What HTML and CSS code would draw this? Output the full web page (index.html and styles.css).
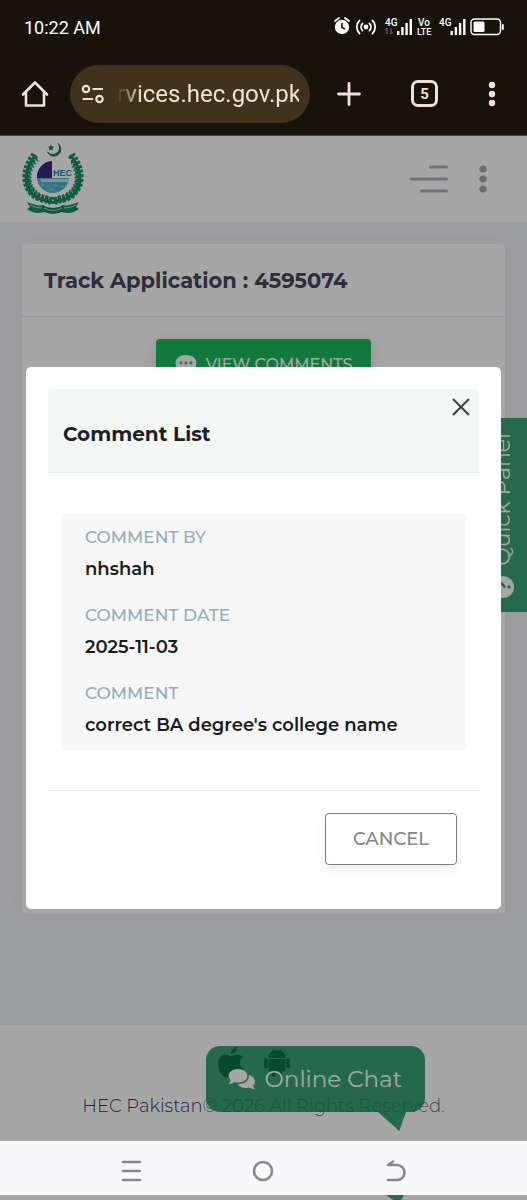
FILE: index.html
```html
<!DOCTYPE html>
<html lang="en">
<head>
  <meta charset="UTF-8">
  <meta name="viewport" content="width=device-width, initial-scale=1.0">
  <title>Track Application</title>
  <link rel="stylesheet" href="styles.css">
</head>
<body>
  <!-- Phone status bar and browser toolbar -->
  <div class="browser-top">
    <div class="status-bar">
      <span>10:22 AM</span>
      <svg class="status-icons" width="172" height="24" viewBox="0 0 172 24" fill="#fff">
        <circle cx="9" cy="12" r="7.2"/>
        <path d="M2 6l4-3M16 6l-4-3" stroke="#fff" stroke-width="1.8" stroke-linecap="round"/>
        <path d="M9 8v4.500l3 1.500" fill="none" stroke="#17130b" stroke-width="1.600"/>
        <circle cx="33" cy="12" r="2.400"/>
        <path d="M29.500 8.500a5 5 0 0 0 0 7M36.500 8.500a5 5 0 0 1 0 7M26.500 5.500a9.200 9.200 0 0 0 0 13M39.500 5.500a9.200 9.200 0 0 1 0 13" fill="none" stroke="#fff" stroke-width="1.800" stroke-linecap="round"/>
        <text x="52" y="11" font-size="10" font-weight="500">4G</text>
        <path d="M54 13v6M52.500 14.500l1.500-1.500M58 13v6M58 19l1.500-1.500" stroke="#77736b" fill="none"/>
        <path d="M64 16h2.400v4h-2.400zM68.200 12h2.400v8h-2.400zM72.400 8h2.400v12h-2.400zM76.600 4h2.400v16h-2.400z"/>
        <text x="85" y="11" font-size="10" font-weight="500">Vo</text>
        <text x="84" y="20" font-size="9" font-weight="500">LTE</text>
        <text x="106" y="11" font-size="10" font-weight="500">4G</text>
        <path d="M117.500 16h2.400v4h-2.400zM121.700 12h2.400v8h-2.400zM125.900 8h2.400v12h-2.400zM130.100 4h2.400v16h-2.400z"/>
        <rect x="138" y="4" width="29.500" height="15.500" rx="3.500" fill="none" stroke="#fff" stroke-width="1.400"/>
        <rect x="140.500" y="6.500" width="11" height="10.500" rx="1.500"/>
        <rect x="168.800" y="9" width="2" height="6" rx="1"/>
      </svg>
    </div>
    <div class="toolbar">
      <button class="tool" aria-label="Home">
        <svg width="28" height="28" viewBox="0 0 28 28" fill="none" stroke="#f2e2d6" stroke-width="2.600" stroke-linejoin="round" stroke-linecap="round"><path d="M5 12.500V25.500h18V12.500M2 14.500L14 2.500l12 12"/></svg>
      </button>
      <div class="address">
        <svg width="24" height="20" viewBox="0 0 24 20" fill="none" stroke="#f2e2d6" stroke-width="2.200"><circle cx="5" cy="5" r="3.200"/><path d="M11.500 5H22M1.500 15H12"/><circle cx="18.500" cy="15" r="3.200"/></svg>
        <input class="url" type="text" aria-label="Address" value="rvices.hec.gov.pk">
      </div>
      <div class="toolbar-actions">
        <button class="tool" aria-label="New tab">
          <svg width="24" height="24" viewBox="0 0 24 24" stroke="#f2e2d6" stroke-width="2.800" stroke-linecap="round"><path d="M12 1.500v21M1.500 12h21"/></svg>
        </button>
        <button class="tool tabs" aria-label="Tabs">5</button>
        <button class="tool" aria-label="Browser menu">
          <svg width="8" height="26" viewBox="0 0 8 26" fill="#f2e2d6"><circle cx="4" cy="4" r="3.200"/><circle cx="4" cy="13" r="3.200"/><circle cx="4" cy="22" r="3.200"/></svg>
        </button>
      </div>
    </div>
  </div>

  <div class="page">
    <header class="site-header">
      <a class="logo" href="#" aria-label="HEC">
        <svg width="64" height="74" viewBox="0 0 64 74">
          <path d="M36 1.500a7 7 0 1 1-10.500 8.500a6.500 6.500 0 1 0 10.500-8.500z" fill="#12865a" stroke="#12865a"/>
          <path d="M29 2.500l1 2 2.200.2-1.600 1.600.5 2.200-2.100-1.100-2 1.100.5-2.200-1.600-1.600 2.200-.2z" fill="#12865a"/>
          <g fill="none" stroke="#159164">
            <path d="M14 13C2 25-1 48 16 56c6 3 10 2 15 5M48 13c12 12 15 35-2 43-6 3-10 2-15 5" stroke-width="3"/>
            <path d="M13 13C1 27 1 47 16 55c6 3 10 2 15 5M49 13c12 14 12 34-3 42-6 3-10 2-15 5" stroke-width="8" stroke-dasharray="2.800 1.500"/>
            <path d="M15 17C4 29 4 45 17 53c5 3 9 3 13 6M47 17c11 12 11 28-2 36-5 3-9 3-13 6" stroke-width="5" stroke-dasharray="1.500 2.500"/>
          </g>
          <circle cx="31" cy="35" r="16" fill="#53b3d1"/>
          <path d="M15 36A16 16 0 0 1 30 19V36z" fill="#3a2b83"/>
          <path d="M30 17h19v19H30z" fill="#fff"/>
          <path d="M18 37h29v3H20z" fill="#c2e3ed"/>
          <path d="M20 41v4M24 44l3 1M32 43l4 1M39 45l3-1M27 48l4-1" stroke="#9cd3e4"/>
          <text x="31" y="34" class="logo-text" fill="#1683ae">HEC</text>
          <path d="M5 60c8 3 12 4 17 3v7c-6 2-12 1-17-3l3-2zM57 60c-8 3-12 4-17 3v7c6 2 12 1 17-3l-3-2z" fill="#159164"/>
          <path d="M20 63q11 6 22 0v6q-11 6-22 0z" fill="#12865a"/>
          <path d="M22 66q9 5 18 0M8 63q6 3 12 3M54 63q-6 3-12 3" fill="none" stroke="#a9dbc8" stroke-width="1"/>
        </svg>
      </a>
      <div class="header-actions">
        <button class="tool" aria-label="Menu">
          <svg width="38" height="28" viewBox="0 0 38 28" stroke="#b0afba" stroke-width="3" stroke-linecap="round"><path d="M20.500 2H36.500M1.500 14h35M11.500 26h25"/></svg>
        </button>
        <button class="tool" aria-label="More">
          <svg width="8" height="28" viewBox="0 0 8 28" fill="#a9a9b0"><circle cx="4" cy="4" r="3.600"/><circle cx="4" cy="14" r="3.600"/><circle cx="4" cy="24" r="3.600"/></svg>
        </button>
      </div>
    </header>

    <main class="content">
      <section class="card">
        <h1 class="card-title">Track Application : 4595074</h1>
        <div class="card-body">
          <button class="btn-comments">
            <svg width="22" height="20" viewBox="0 0 22 20"><path d="M11 1C5 1 .5 4.500.5 9c0 2.500 1 4 2.500 5.500L1 19l6-2c8 2 14.500-2 14.500-8C21.500 4.500 17 1 11 1z" fill="#fff"/><g fill="#1cba5e"><circle cx="6" cy="9" r="1.400"/><circle cx="11" cy="9" r="1.400"/><circle cx="16" cy="9" r="1.400"/></g></svg>
            VIEW COMMENTS
          </button>
        </div>
      </section>
    </main>

    <footer class="site-footer">
      <div class="apps">
        <a href="#" aria-label="iOS app">
          <svg width="26" height="32" viewBox="0 0 26 32" fill="#111"><path d="M13 9c2 0 4-2 7-1.500 2 .2 4 1.500 5 3-5 3-4 9.500 1 11.500-1.500 4-4 8-6.500 8.500-2 .2-3-1.200-5.500-1.200s-3.500 1.200-5.500 1.200C4 30.500 0 23 0 17.500 0 11 4 7.500 8 7.500c2 0 3.500 1.500 5 1.500zM13 7c0-3.500 2.500-6.500 6-7 .3 4-2.500 7-6 7z"/></svg>
        </a>
        <a href="#" aria-label="Android app">
          <svg width="26" height="32" viewBox="0 0 26 32" fill="#111"><path d="M4.500 11C4.500 6 7 4.500 9 4L8 2.300l.8-.5L10 3.600q3-.8 6 0l1.200-1.800.8.5L17 4c2 .5 4.500 2 4.500 7zM4.500 12h17v11q0 1.500-1.500 1.500h-2V28q0 1.800-1.800 1.800T14.500 28v-3.500h-3V28q0 1.800-1.800 1.800T8 28v-3.500H6q-1.500 0-1.500-1.500z"/><rect y="11" width="3.800" height="10.500" rx="1.700"/><rect x="22.200" y="11" width="3.800" height="10.500" rx="1.700"/></svg>
        </a>
      </div>
      <p class="copyright"><a href="#">HEC Pakistan</a>© 2026 All Rights Reserved.</p>
    </footer>

    <button class="quick-panel">
      <svg width="22" height="22" viewBox="0 0 22 22"><circle cx="11" cy="11" r="11" fill="#fff"/><g transform="rotate(-90 11 11)"><path d="M7.500 8.500a3.500 3.500 0 1 1 5 3q-1.500.7-1.500 2" fill="none" stroke="#3aa476" stroke-width="2.600"/><circle cx="11" cy="17" r="1.700" fill="#3aa476"/></g></svg>
      <span>Quick Panel</span>
    </button>

    <button class="chat">
      <svg width="28" height="22" viewBox="0 0 28 22" fill="#fff"><path d="M10 1c5.500 0 9.500 3 9.500 6.800s-4 6.800-9.500 6.800q-2 0-3.500-.5Q4 16 .5 16 2.500 14 2.800 12.200.5 10.500.5 7.800C.5 4 4.500 1 10 1z"/><path d="M21 7c3.500 1 6 3.300 6 6.200q0 2.800-2 4.500.5 2 2.500 3.500-3.500.3-6-1.600c-5 1.200-10-.3-11.800-3.400C16.500 16.200 21.500 12.500 21 7z"/></svg>
      Online Chat
    </button>

    <!-- Comment list dialog -->
    <div class="overlay">
      <div class="modal" role="dialog" aria-labelledby="modalTitle">
        <div class="modal-header">
          <h2 id="modalTitle">Comment List</h2>
          <button class="close" aria-label="Close">
            <svg width="18" height="18" viewBox="0 0 18 18" stroke="#444" stroke-width="2.200"><path d="M1 1l16 16M17 1L1 17"/></svg>
          </button>
        </div>
        <dl class="comment">
          <div>
            <dt>COMMENT BY</dt>
            <dd>nhshah</dd>
          </div>
          <div>
            <dt>COMMENT DATE</dt>
            <dd>2025-11-03</dd>
          </div>
          <div>
            <dt>COMMENT</dt>
            <dd>correct BA degree's college name</dd>
          </div>
        </dl>
        <div class="modal-footer">
          <button class="btn-cancel">CANCEL</button>
        </div>
      </div>
    </div>
  </div>

  <!-- System navigation -->
  <nav class="system-nav">
    <button class="tool" aria-label="Recents">
      <svg width="22" height="22" viewBox="0 0 22 22" stroke="#88888b" stroke-width="2.600" stroke-linecap="round"><path d="M3 2h17M3 11h17M3 20h17"/></svg>
    </button>
    <button class="tool" aria-label="Home screen">
      <svg width="22" height="22" viewBox="0 0 22 22" fill="none" stroke="#88888b" stroke-width="2.600"><circle cx="11" cy="11" r="9"/></svg>
    </button>
    <button class="tool" aria-label="Back">
      <svg width="22" height="22" viewBox="0 0 22 22" fill="none" stroke="#88888b" stroke-width="2.600" stroke-linecap="round" stroke-linejoin="round"><path d="M8 1.500L3 5H12a7.500 7.500 0 0 1 0 15H3"/></svg>
    </button>
  </nav>
  <div class="page-edge"></div>
</body>
</html>
```
FILE: styles.css
```css
* {
  box-sizing: border-box;
}
body {
  margin: 0;
  min-height: 100vh;
  display: flex;
  flex-direction: column;
  font-family: Montserrat, Inter, sans-serif;
  font-size: 18px;
  background: #a6a6a6;
}
h1, h2, p, dl, dd {
  margin: 0;
}
button {
  font-family: inherit;
  border: none;
  cursor: pointer;
}
svg {
  display: block;
  flex-shrink: 0;
}
a {
  text-decoration: none;
}
.tool {
  background: none;
  padding: 0;
}

/* Browser */
.browser-top {
  background: #17130b;
  border-bottom: 1px solid #4c4637;
  font-family: Roboto, sans-serif;
  color: #fff;
}
.status-bar {
  display: flex;
  align-items: center;
  justify-content: space-between;
  height: 54px;
  padding: 0 22px 0 24px;
}
.toolbar {
  display: flex;
  align-items: center;
  height: 81px;
  padding: 0 31px 2px 21px;
}
.address {
  flex: 1;
  min-width: 0;
  display: flex;
  align-items: center;
  gap: 12px;
  height: 58px;
  margin: 0 27px 0 21px;
  padding: 0 11px;
  border-radius: 29px;
  background: #41321b;
}
.url {
  flex: 1;
  min-width: 0;
  padding: 0;
  border: none;
  outline: none;
  background: none;
  color: #f2e2d6;
  font-family: Roboto, sans-serif;
  font-size: 24px;
  text-align: right;
  mask-image: linear-gradient(to right, transparent, #000 24px);
}
.toolbar-actions {
  display: flex;
  align-items: center;
  gap: 50px;
}
.tabs {
  width: 27px;
  height: 27px;
  border: 3px solid #f2e2d6;
  border-radius: 7px;
  color: #f2e2d6;
  font-size: 15px;
  font-weight: 700;
}

/* Page */
.page {
  position: relative;
  flex: 1;
  display: flex;
  flex-direction: column;
  background: #f2f3f8;
}
.site-header {
  display: flex;
  align-items: center;
  justify-content: space-between;
  height: 86px;
  padding: 0 40px 0 22px;
  background: #fff;
}
.logo-text {
  font-family: "Liberation Sans", sans-serif;
  font-size: 9px;
  font-weight: 700;
}
.header-actions {
  display: flex;
  gap: 31px;
}
.content {
  flex: 1;
  display: flex;
  padding: 22px 22px 111px;
}
.card {
  flex: 1;
  border-radius: 4px;
  background: #fff;
  box-shadow: 0 0 16px rgba(82, 63, 105, 0.08);
}
.card-title {
  padding: 21px 22px 19px;
  border-bottom: 1px solid #e2e3ea;
  color: #48465b;
  font-size: 21px;
  font-weight: 700;
  line-height: 32px;
}
.card-body {
  display: flex;
  justify-content: center;
  padding: 22px;
}
.btn-comments {
  display: flex;
  align-items: center;
  gap: 9px;
  height: 50px;
  padding: 0 19px;
  border-radius: 4px;
  background: #1cba5e;
  box-shadow: 0 4px 16px rgba(0, 0, 0, 0.15);
  color: #fff;
  font-size: 16px;
  font-weight: 500;
}
.site-footer {
  display: flex;
  flex-direction: column;
  align-items: center;
  height: 116px;
  padding-top: 22px;
  background: #fff;
}
.apps {
  display: flex;
}
.apps a {
  margin-right: 20px;
}
.copyright {
  margin-top: 14px;
  color: #646780;
  font-size: 18px;
  font-weight: 300;
  line-height: 26px;
}
.copyright a {
  color: #353460;
}
.quick-panel {
  position: absolute;
  top: 282px;
  right: 0;
  display: flex;
  flex-direction: column-reverse;
  align-items: center;
  gap: 10px;
  height: 194px;
  padding: 14px 11px;
  border-radius: 4px 0 0 4px;
  background: #3aa476;
  color: #fff;
  font-size: 22px;
}
.quick-panel span {
  writing-mode: vertical-rl;
  transform: rotate(180deg);
}
.chat {
  position: absolute;
  right: 102px;
  bottom: 29px;
  display: flex;
  align-items: center;
  gap: 9px;
  height: 66px;
  padding: 0 23px 0 22px;
  border-radius: 14px;
  background: rgba(9, 139, 84, 0.8);
  color: #fff;
  font-size: 23px;
}
.chat::after {
  content: "";
  position: absolute;
  top: 100%;
  right: 19px;
  width: 28px;
  height: 19px;
  background: rgba(9, 139, 84, 0.8);
  clip-path: polygon(0 0, 100% 0, 76% 100%);
}

/* Modal */
.overlay {
  position: absolute;
  inset: 0;
  display: flex;
  align-items: center;
  padding: 0 26px 2px;
  background: rgba(0, 0, 0, 0.35);
}
.modal {
  flex: 1;
  padding: 22px;
  border-radius: 5px;
  background: #fff;
}
.modal-header {
  position: relative;
  padding: 29px 15px 22px;
  border-bottom: 1px solid #e6eceb;
  border-radius: 4px 4px 0 0;
  background: #f3f8f7;
}
.modal-header h2 {
  color: #1c1f24;
  font-size: 20px;
  font-weight: 700;
  line-height: 32px;
}
.close {
  position: absolute;
  top: 9px;
  right: 9px;
  padding: 0;
  background: none;
}
.comment {
  display: flex;
  flex-direction: column;
  gap: 14px;
  margin: 40px 13px 39px;
  padding: 8px 24px 10px;
  border-radius: 4px;
  background: #f7f7f7;
  line-height: 32px;
}
.comment dt {
  color: #94adb6;
  font-size: 17px;
  font-weight: 500;
}
.comment dd {
  color: #1a1c20;
  font-size: 18px;
  font-weight: 600;
}
.modal-footer {
  display: flex;
  justify-content: flex-end;
  padding: 22px;
  border-top: 1px solid #ebedf2;
}
.btn-cancel {
  height: 52px;
  padding: 0 27px;
  border: 1px solid #7c7c7c;
  border-radius: 4px;
  background: #fff;
  box-shadow: 0 4px 10px rgba(0, 0, 0, 0.08);
  color: #868686;
  font-size: 18px;
  font-weight: 500;
}

/* System navigation */
.system-nav {
  display: flex;
  align-items: center;
  justify-content: space-around;
  height: 54px;
  padding: 6px 65px 0;
  background: #f9f9fc;
}
.page-edge {
  height: 5px;
  background: #a6a6a6;
}
.page-edge::after {
  content: "";
  display: block;
  width: 18px;
  height: 5px;
  margin-left: auto;
  margin-right: 123px;
  background: #26694d;
  clip-path: polygon(0 0, 100% 0, 85% 100%, 40% 100%);
}
```
